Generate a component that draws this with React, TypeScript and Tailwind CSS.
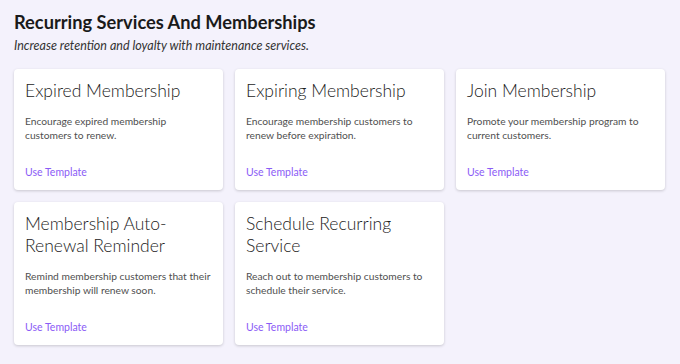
const templates = [
    {
        title: 'Expired Membership',
        text: 'Encourage expired membership customers to renew.',
    },
    {
        title: 'Expiring Membership',
        text: 'Encourage membership customers to renew before expiration.',
    },
    {
        title: 'Join Membership',
        text: 'Promote your membership program to current customers.',
    },
    {
        title: 'Membership Auto-Renewal Reminder',
        text: 'Remind membership customers that their membership will renew soon.',
    },
    {
        title: 'Schedule Recurring Service',
        text: 'Reach out to membership customers to schedule their service.',
    },
]

function TemplateCard({ title, text }: { title: string; text: string }) {
    return (
        <div className="flex flex-col rounded bg-white px-[11px] pt-[11px] pb-[11px] shadow-[0_1px_3px_rgba(0,0,0,0.18)]">
            <h2 className="pr-6 text-[17.5px] leading-[22px] font-light text-[#1c1c1c]">
                {title}
            </h2>
            <p className="mt-[12px] text-[10.25px] leading-[14px] text-[#505050]">
                {text}
            </p>
            <a className="mt-auto pt-[23px] text-[10.5px] leading-[14px] text-[#8b5cf6]">
                Use Template
            </a>
        </div>
    )
}

export default function App() {
    return (
        <div className="min-h-[364px] w-[680px] bg-[#f4f2fc] px-[14px] pt-[10px] pb-4 font-['Lato',sans-serif]">
            <h1 className="text-[18.25px] leading-6 font-bold text-[#1a1a1a]">
                Recurring Services And Memberships
            </h1>
            <p className="mt-[2px] text-[12.5px] leading-5 text-[#333] italic">
                Increase retention and loyalty with maintenance services.
            </p>
            <div className="mt-[13px] grid grid-cols-3 gap-x-[12px] gap-y-[12px] pr-px">
                {templates.map((t) => (
                    <TemplateCard key={t.title} title={t.title} text={t.text} />
                ))}
            </div>
        </div>
    )
}
